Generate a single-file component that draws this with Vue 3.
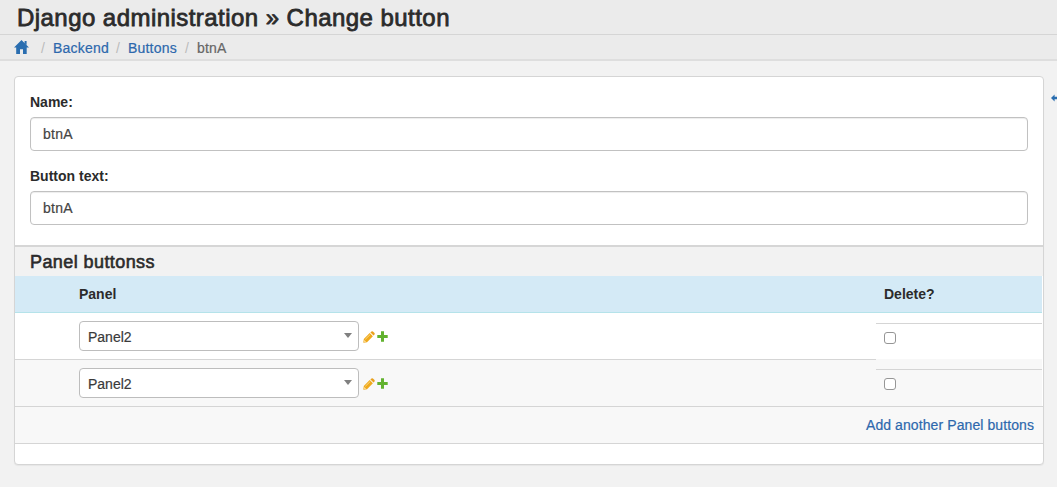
<script setup>
import { ref } from 'vue'

const fields = ref([
  { id: 'name', label: 'Name:', value: 'btnA' },
  { id: 'text', label: 'Button text:', value: 'btnA' },
])
const rows = ref([
  { id: 1, panel: 'Panel2', remove: false },
  { id: 2, panel: 'Panel2', remove: false },
])
</script>

<template>
  <div class="page">
    <header class="title-bar">
      <h1>Django administration » Change button</h1>
    </header>
    <nav class="crumbs">
      <svg class="home" width="15" height="14" viewBox="0 0 15 14">
        <path d="M7.5 0 L15 7.5 H12.7 V14 H9 V9.3 H6 V14 H2.2 V7.5 H0 Z M10.6 1 H12.6 V5 L10.6 3 Z" fill="#2a6eb0" />
      </svg>
      <i class="s1">/</i><a class="c1">Backend</a>
      <i>/</i><a class="c2">Buttons</a>
      <i>/</i><span class="c3">btnA</span>
    </nav>

    <svg class="edge-arrow" width="6" height="8" viewBox="0 0 6 8">
      <path d="M0 4 L3.6 0.4 V2.8 H6 V5.2 H3.6 V7.6 Z" fill="#2a6eb0" />
    </svg>

    <main class="card">
      <section class="fields">
        <div v-for="f in fields" :key="f.id" class="field">
          <label :for="f.id">{{ f.label }}</label>
          <input :id="f.id" v-model="f.value" type="text" />
        </div>
      </section>

      <section class="inline">
        <h2>Panel buttonss</h2>
        <div class="table">
          <div class="thead">
            <b class="main-col">Panel</b>
            <b>Delete?</b>
          </div>
          <div v-for="(r, i) in rows" :key="r.id" class="row" :class="{ alt: i % 2 }">
            <div class="main-cell">
              <div class="select"><span>{{ r.panel }}</span><i class="caret"></i></div>
              <svg class="pencil" width="12" height="12" viewBox="0 0 12 12">
                <path d="M0.3 11.7 L0.8 8 L6.7 2.1 L9.9 5.3 L4 11.2 Z" fill="#efa91c" />
                <path d="M7.4 1.4 L8.5 0.4 Q9.2 0 9.9 0.5 L11.5 2.1 Q12 2.8 11.5 3.5 L10.6 4.6 Z" fill="#e9a01c" />
                <path d="M2.3 8.3 L7.2 3.5" stroke="#fbdc8c" stroke-width="0.9" />
                <path d="M1.3 9 L3 10.7 L1.3 10.9 Z" fill="#fff0c8" />
              </svg>
              <svg class="plus" width="11" height="11" viewBox="0 0 11 11">
                <path d="M4 0.3 H7 V4 H10.7 V7 H7 V10.7 H4 V7 H0.3 V4 H4 Z" fill="#62b22f" />
              </svg>
            </div>
            <div class="del-cell"><input v-model="r.remove" type="checkbox" /></div>
          </div>
          <div class="add-row"><a>Add another Panel buttons</a></div>
        </div>
      </section>
    </main>
  </div>
</template>

<style>
body {
  margin: 0;
  background: #f2f2f2;
  overflow: hidden;
}
</style>

<style scoped>
* {
  box-sizing: border-box;
}
.page {
  position: relative;
  width: 1057px;
  height: 487px;
  overflow: hidden;
  background: #f2f2f2;
  color: #2b2b2b;
  font: 14px/20px "Liberation Sans", Arial, sans-serif;
}
.title-bar {
  height: 35px;
  padding: 4px 0 0 17px;
  background: #ebebeb;
  border-bottom: 1px solid #d5d5d5;
}
h1 {
  margin: 0;
  font-size: 24px;
  line-height: 27px;
  font-weight: 400;
  letter-spacing: 0.45px;
  white-space: nowrap;
  -webkit-text-stroke: 0.8px #2b2b2b;
}
a {
  color: #2d68ad;
  -webkit-text-stroke: 0.2px #2d68ad;
}
.crumbs {
  display: flex;
  height: 26px;
  padding: 3px 0 0 14px;
  background: #ebebeb;
  border-bottom: 2px solid #dedede;
}
.home {
  margin-top: 2px;
}
.crumbs i {
  font-style: normal;
  color: #bbb;
  width: 4px;
}
.crumbs .s1 {
  margin-left: 12px;
}
.crumbs a {
  letter-spacing: 0.2px;
}
.c1 {
  width: 63px;
  margin-left: 8px;
}
.c2 {
  width: 57px;
  margin-left: 8px;
}
.c3 {
  margin-left: 8px;
  color: #666;
  letter-spacing: 0.15px;
  -webkit-text-stroke: 0.2px #666;
}
.edge-arrow {
  position: absolute;
  left: 1051px;
  top: 94px;
}
.card {
  width: 1030px;
  height: 389px;
  margin: 15px 0 0 14px;
  background: #fff;
  border: 1px solid #d5d5d5;
  border-radius: 4px;
  box-shadow: 0 1px 1px rgba(0, 0, 0, 0.05);
}
.fields {
  height: 168px;
  padding: 15px 15px 0;
}
.field {
  height: 74px;
}
label {
  display: block;
  height: 25px;
  font-weight: 700;
}
.field input {
  display: block;
  width: 998px;
  height: 34px;
  padding: 6px 12px;
  font: inherit;
  letter-spacing: 0.25px;
  color: #444;
  background: #fff;
  border: 1px solid #c1c1c1;
  border-radius: 4px;
  box-shadow: inset 0 1px 1px rgba(0, 0, 0, 0.075);
  outline: none;
  -webkit-text-stroke: 0.2px #444;
}
h2 {
  height: 31px;
  margin: 0;
  padding: 3px 0 0 15px;
  font-size: 18px;
  line-height: 24px;
  font-weight: 400;
  letter-spacing: 0.42px;
  background: #f2f2f2;
  border-top: 2px solid #d6d6d6;
  -webkit-text-stroke: 0.6px #2b2b2b;
}
.table {
  width: 1027px;
}
.thead {
  display: flex;
  height: 37px;
  padding: 8px 0 0 64px;
  background: #d4eaf6;
  border-bottom: 1px solid #b5e3ea;
}
.main-col {
  width: 805px;
}
.row {
  display: flex;
  height: 46px;
  background: #fff;
}
.row.alt {
  height: 47px;
  background: #f8f8f8;
}
.main-cell {
  display: flex;
  width: 861px;
  padding: 8px 0 0 64px;
}
.alt .main-cell {
  border-top: 1px solid #d5d5d5;
}
.select {
  display: flex;
  justify-content: space-between;
  width: 280px;
  height: 30px;
  padding: 5px 6px 0 8px;
  color: #3a3a3a;
  background: #fff;
  border: 1px solid #bdbdbd;
  border-radius: 4px;
  -webkit-text-stroke: 0.2px #3a3a3a;
}
.caret {
  height: 0;
  margin-top: 6px;
  border: solid transparent;
  border-width: 5px 4px 0;
  border-top-color: #808080;
}
.pencil {
  margin: 10px 0 0 4px;
}
.plus {
  margin: 10px 0 0 2px;
}
.del-cell {
  flex: 1;
  margin-top: 10px;
  padding: 8px 0 0 8px;
  border-top: 1px solid #d5d5d5;
}
.del-cell input {
  display: block;
  appearance: none;
  width: 12px;
  height: 12px;
  margin: 0;
  background: #fff;
  border: 1px solid #969696;
  border-radius: 3px;
}
.add-row {
  width: 1028px;
  height: 38px;
  padding: 8px 9px 0 0;
  text-align: right;
  letter-spacing: 0.09px;
  background: #f8f8f8;
  border: solid #d5d5d5;
  border-width: 1px 0;
}
</style>
